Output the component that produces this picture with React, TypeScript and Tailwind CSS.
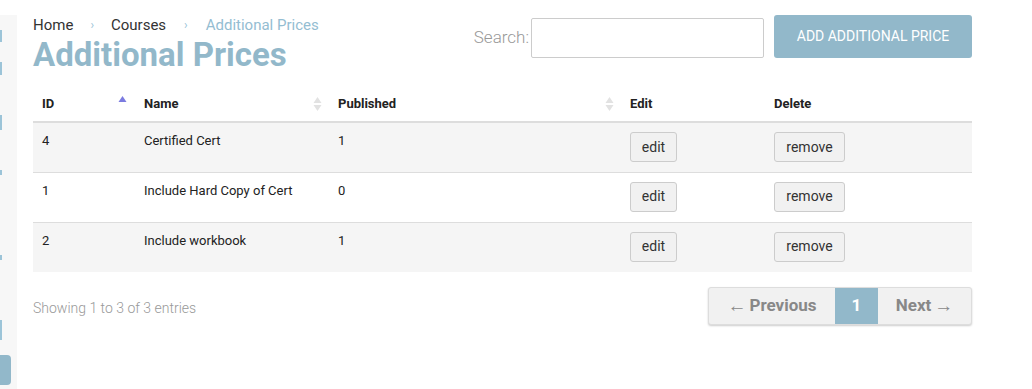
import React from 'react'

const rows = [
  { id: 4, name: 'Certified Cert', published: 1 },
  { id: 1, name: 'Include Hard Copy of Cert', published: 0 },
  { id: 2, name: 'Include workbook', published: 1 },
]

function SortIcon({ active }: { active?: boolean }) {
  if (active) {
    return (
      <svg width="9" height="12" viewBox="0 0 9 12" className="shrink-0 -mt-[6px]">
        <path d="M4.5 1 L8.5 7 L0.5 7 Z" fill="#7b7be0" />
      </svg>
    )
  }
  return (
    <svg width="9" height="16" viewBox="0 0 9 16" className="shrink-0">
      <path d="M4.5 1 L8.5 7 L0.5 7 Z" fill="#e2e2e2" />
      <path d="M4.5 15 L8.5 9 L0.5 9 Z" fill="#e2e2e2" />
    </svg>
  )
}

function Sidebar() {
  return (
    <div className="w-[17px] shrink-0 mt-[15px] bg-[#f7f7f7] flex flex-col">
      <div className="h-[15px]" />
      <div className="w-[2px] h-[12px] bg-[#9cc4d8]" />
      <div className="h-[20px]" />
      <div className="w-[2px] h-[13px] bg-[#9cc4d8]" />
      <div className="h-[40px]" />
      <div className="w-[2px] h-[15px] bg-[#9cc4d8]" />
      <div className="h-[40px]" />
      <div className="w-[2px] h-[5px] bg-[#9cc4d8]" />
      <div className="h-[80px]" />
      <div className="w-[2px] h-[5px] bg-[#9cc4d8]" />
      <div className="h-[60px]" />
      <div className="w-[2px] h-[20px] bg-[#9cc4d8]" />
      <div className="h-[15px]" />
      <div className="w-[11px] h-[30px] bg-[#92b8ca] rounded-r-[4px]" />
    </div>
  )
}

export default function App() {
  return (
    <div className="w-[1032px] h-[389px] bg-white flex overflow-hidden" style={{ fontFamily: 'Roboto, "Liberation Sans", sans-serif' }}>
      <Sidebar />

      <div className="flex-1 pl-[16px] pr-[60px]">
        {/* Header */}
        <div className="flex justify-between items-start">
          <div className="pt-[15px]">
            <div className="flex items-center text-[15px] leading-[20px] text-[#333]">
              <span>Home</span>
              <span className="text-[#9cc4d8] text-[12px] mx-[17px]">›</span>
              <span>Courses</span>
              <span className="text-[#9cc4d8] text-[12px] mx-[18px]">›</span>
              <span className="text-[#94bdd2]">Additional Prices</span>
            </div>
            <h1 className="text-[33px] leading-[38px] font-bold text-[#92b8ca] mt-[1px]">Additional Prices</h1>
          </div>

          <div className="flex items-center pt-[15px]">
            <label className="text-[17px] font-light text-[#999] mr-[2px] mt-[2px]">Search:</label>
            <input className="w-[233px] h-[40px] border border-[#ccc] rounded-[2px] bg-white mt-[2px]" />
            <button className="ml-[10px] w-[198px] h-[43px] bg-[#92b8ca] rounded-[3px] text-white text-[14px] uppercase">
              Add additional price
            </button>
          </div>
        </div>

        {/* Table */}
        <table className="w-full mt-[13px] border-collapse text-[13px] text-[#222]">
          <thead>
            <tr className="h-[35px] border-b-2 border-[#ddd] text-left">
              <th className="w-[101px] pl-[9px] pr-[7px] font-bold">
                <div className="flex items-center justify-between">ID <SortIcon active /></div>
              </th>
              <th className="w-[194px] pl-[10px] pr-[6px] font-bold">
                <div className="flex items-center justify-between">Name <SortIcon /></div>
              </th>
              <th className="w-[292px] pl-[10px] pr-[6px] font-bold">
                <div className="flex items-center justify-between">Published <SortIcon /></div>
              </th>
              <th className="w-[144px] pl-[10px] font-bold">Edit</th>
              <th className="pl-[10px] font-bold">Delete</th>
            </tr>
          </thead>
          <tbody>
            {rows.map((r, i) => (
              <tr key={r.id} className={`h-[50px] align-top ${i % 2 === 0 ? 'bg-[#f5f5f5]' : 'bg-white'} ${i < rows.length - 1 ? 'border-b border-[#ddd]' : ''}`}>
                <td className="pl-[9px] pt-[8px]">{r.id}</td>
                <td className="pl-[10px] pt-[8px]">{r.name}</td>
                <td className="pl-[10px] pt-[8px]">{r.published}</td>
                <td className="pl-[10px] pt-[9px]">
                  <button className="w-[47px] h-[30px] bg-[#f1f1f1] border border-[#ccc] rounded-[3px] text-[14px] text-[#333]">edit</button>
                </td>
                <td className="pl-[10px] pt-[9px]">
                  <button className="w-[71px] h-[30px] bg-[#f1f1f1] border border-[#ccc] rounded-[3px] text-[14px] text-[#333]">remove</button>
                </td>
              </tr>
            ))}
          </tbody>
        </table>

        {/* Footer */}
        <div className="flex justify-between items-center mt-[15px]">
          <div className="text-[14px] font-light text-[#999] mt-[4px]">Showing 1 to 3 of 3 entries</div>
          <div className="flex h-[38px] border border-[#ddd] rounded-[3px] shadow-[0_1px_2px_rgba(0,0,0,0.2)] bg-[#f1f1f1] text-[17px] font-bold text-[#888] overflow-hidden">
            <div className="w-[126px] flex items-center justify-center">
              <span className="font-light text-[19px] mr-[3px]">←</span>Previous
            </div>
            <div className="w-[43px] flex items-center justify-center bg-[#92b8ca] text-white">1</div>
            <div className="w-[93px] flex items-center justify-center">
              Next<span className="font-light text-[19px] ml-[3px]">→</span>
            </div>
          </div>
        </div>
      </div>
    </div>
  )
}
